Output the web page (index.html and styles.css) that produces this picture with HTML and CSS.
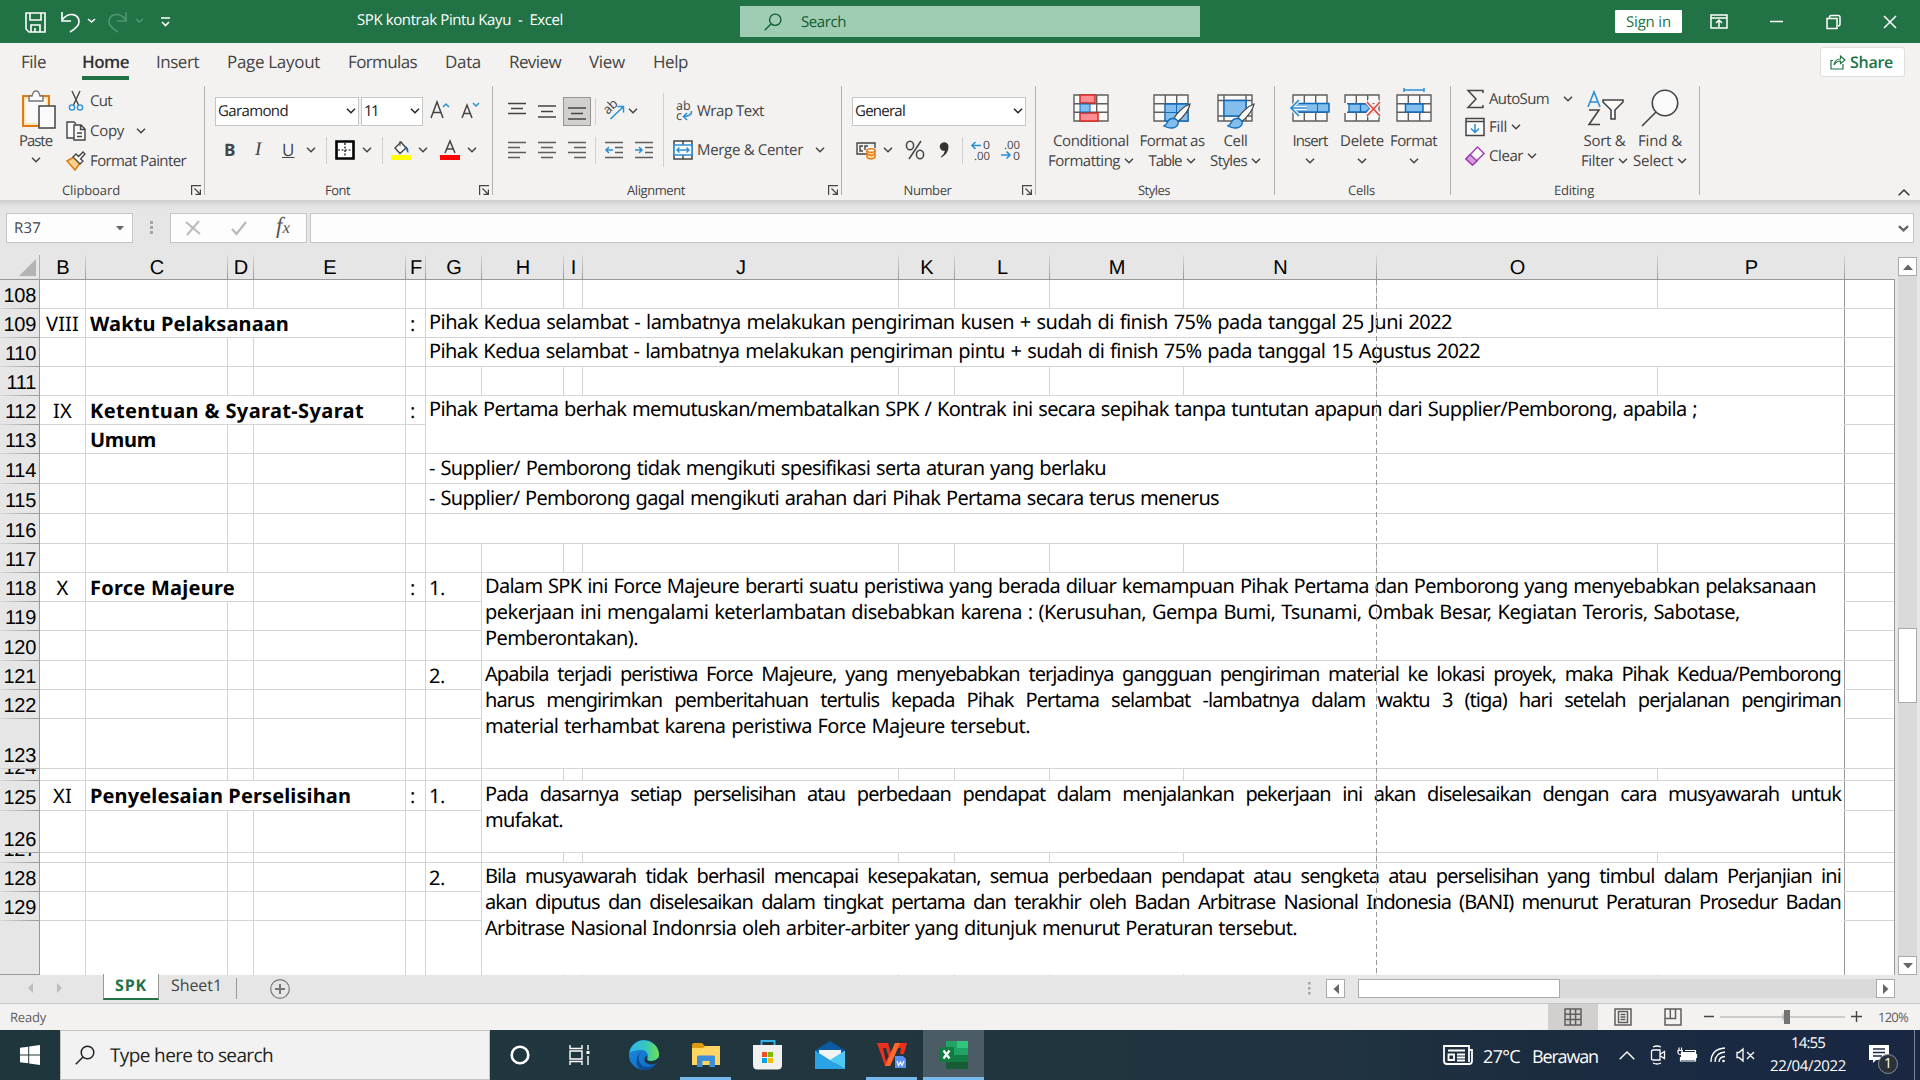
FILE: index.html
```
<!DOCTYPE html>
<html lang="id">
<head>
<meta charset="utf-8">
<title>SPK kontrak Pintu Kayu - Excel</title>
<link rel="stylesheet" href="styles.css">
</head>
<body>
<svg class="defs" aria-hidden="true">
  <symbol id="chev" viewBox="0 0 10 6"><path d="M1 .8 5 4.8 9 .8" fill="none" stroke="currentColor" stroke-width="1.5"/></symbol>
  <symbol id="launch" viewBox="0 0 10 10"><path d="M.6 10V.6H10M3.5 3.5 9 9M9.4 4.5V9.4H4.5" fill="none" stroke="#444" stroke-width="1.2"/></symbol>
  <symbol id="lens" viewBox="0 0 20 20"><circle cx="12.5" cy="7.5" r="6.3" fill="none" stroke="currentColor" stroke-width="1.5"/><path d="M8 12 .8 19.2" stroke="currentColor" stroke-width="1.5"/></symbol>
  <symbol id="grid" viewBox="0 0 36 28"><path d="M1 1H35V27H1Z" fill="#fafafa"/><path d="M1 1H35V27H1ZM1 9.7H35M1 18.3H35M12.3 1V27M23.7 1V27" fill="none" stroke="#605e5c" stroke-width="1.4"/></symbol>
  <symbol id="brush" viewBox="0 0 28 26"><path d="M27 1C21 3 14 10 11 15L15 18.5C20 14 26 7 27 1Z" fill="#fafafa" stroke="#444" stroke-width="1.3"/><path d="M1 23C5 22 3.500 16 9 15.500C13 15 16 18 15 21C13 26 6 26 1 23Z" fill="#83beec" stroke="#0f6cbd" stroke-width="1.4"/></symbol>
</svg>

<header class="titlebar">
  <svg class="quick" viewBox="0 0 160 24" fill="none" stroke="#fff" stroke-width="1.6">
    <path d="M1 3H20V22H4L1 19ZM5 3V10H16V3M6 22V15H15V22M10 18V22"/>
    <path d="M37 2V11H46M37 10C44 1 54 4 54 12C54 16 50 19 45 22"/><path d="M63 9 66.500 12 70 9"/>
    <g stroke="#4f9770"><path d="M101 2V11H92M101 10C94 1 84 4 84 12C84 16 88 19 93 22"/><path d="M111 9 114.500 12 118 9"/></g>
    <path d="M136 8H145M137 12 140.500 15.500 144 12"/>
  </svg>
  <span class="doc-title" data-w="206">SPK kontrak Pintu Kayu&nbsp; -&nbsp; Excel</span>
  <div class="title-search"><svg class="i18"><use href="#lens"/></svg><span data-w="45">Search</span></div>
  <div class="sign-in"><span data-w="45">Sign in</span></div>
  <svg class="window-icons" viewBox="0 0 190 18" fill="none" stroke="#fff" stroke-width="1.5">
    <path d="M1 2H17V15H1ZM1 5H17M9 14V7.500M6 10 9 7 12 10"/>
    <path d="M60 8.500H73"/>
    <path d="M117 5.500H127V15.500H117ZM119.500 5V3.500Q120 2.500 121.500 2.500H128Q130 2.500 130 4.500V11Q130 13 128 13"/>
    <path d="M174 3 186 15M186 3 174 15"/>
  </svg>
</header>

<nav class="tabs">
  <span data-w="25">File</span><span class="active" data-w="47">Home</span><span data-w="43">Insert</span><span data-w="93">Page Layout</span><span data-w="69">Formulas</span><span data-w="36">Data</span><span data-w="52">Review</span><span data-w="36">View</span><span data-w="35">Help</span>
  <div class="share"><svg viewBox="0 0 16 16" fill="none" stroke="#217346" stroke-width="1.2"><path d="M3 6.500H1V15H13V10M4 11C4.500 7 7 5 10.500 5V2L15 6L10.500 9.500V7C8 7 6 8 4 11Z"/></svg><b data-w="43">Share</b></div>
</nav>

<section class="ribbon">
  <div class="group clipboard">
    <div class="group-body clip-body">
      <div class="paste">
        <svg viewBox="0 0 36 40"><path d="M2 6H28V36H2Z" fill="#fde7b8" stroke="#e07b14" stroke-width="2"/><path d="M5 9H25V33H5Z" fill="#fafafa"/><path d="M8 11V6H11Q12 1 15 1T19 6H22V11Z" fill="#fafafa" stroke="#777" stroke-width="1.4"/><path d="M18 16H34V38H18Z" fill="#fafafa" stroke="#444" stroke-width="1.5"/></svg>
        <span data-w="33">Paste</span><svg class="chev"><use href="#chev"/></svg>
      </div>
      <div class="clip-list">
        <div class="tool"><svg viewBox="0 0 20 20" fill="none" stroke="#444" stroke-width="1.4"><path d="M6 0 12.500 14M14 0 7.500 14"/><circle cx="6" cy="16.500" r="2.600" stroke="#2b8fd6"/><circle cx="14" cy="16.500" r="2.600" stroke="#2b8fd6"/></svg><span data-w="22">Cut</span></div>
        <div class="tool"><svg viewBox="0 0 20 20" fill="#fafafa" stroke="#444" stroke-width="1.400"><path d="M8 17H1V1H8L10 3"/><path d="M8 4H15L19 8V19H8ZM14.500 4V8.500H19M11 12H16M11 15.500H16"/></svg><span data-w="34">Copy</span><svg class="chev"><use href="#chev"/></svg></div>
        <div class="tool"><svg viewBox="0 0 20 20"><path d="M1 10 8 6 14 12 9 19Z" fill="#fcd28b" stroke="#e07b14" stroke-width="1.500"/><path d="M7 6 10 3 12.500 5.500 17 1 19 3 14.500 8 17 10 14 13Z" fill="#fafafa" stroke="#444" stroke-width="1.300"/></svg><span data-w="96">Format Painter</span></div>
      </div>
    </div>
    <div class="group-label launchable"><span data-w="58">Clipboard</span><svg><use href="#launch"/></svg></div>
  </div>

  <div class="group font">
    <div class="group-body">
      <div class="row row1 font-r1">
        <div class="combo"><span data-w="70">Garamond</span><svg class="chev"><use href="#chev"/></svg></div>
        <div class="combo"><span data-w="14">11</span><svg class="chev"><use href="#chev"/></svg></div>
        <svg class="i20" viewBox="0 0 20 20" fill="none" stroke="#444" stroke-width="1.500"><path d="M1 17 7 1 13 17M3 11.500H11"/><path d="M13 6 16 3 19 6" stroke="#2b8fd6"/></svg>
        <svg class="i20" viewBox="0 0 20 20" fill="none" stroke="#444" stroke-width="1.500"><path d="M1 17 6 4 11 17M3 12.500H9"/><path d="M12 2 15 5 18 2" stroke="#2b8fd6"/></svg>
      </div>
      <div class="row row2 font-r2">
        <b class="fmt">B</b><i class="fmt it">I</i><u class="fmt">U</u><svg class="chev"><use href="#chev"/></svg><hr>
        <svg class="i20" viewBox="0 0 20 20" fill="none" stroke="#000"><path d="M1.500 1.500H18.500V18.500H1.500Z" stroke-width="2.600" fill="#fff"/><path d="M10 3V17M3 10H17" stroke-dasharray="2 1.500" stroke-width="1.200"/></svg>
        <svg class="chev"><use href="#chev"/></svg><hr>
        <svg class="i20" viewBox="0 0 20 20"><path d="M4 8 10 2 15 8 9 13.500Z" fill="#fafafa" stroke="#444" stroke-width="1.400"/><path d="M9 1V6" stroke="#444"/><path d="M14 6Q18 7 17.500 13Q15 12 15 8Z" fill="#1f6fb5"/><path d="M0 15H20V20H0Z" fill="#ff0"/></svg>
        <svg class="chev"><use href="#chev"/></svg>
        <svg class="i20" viewBox="0 0 20 20"><path d="M5 13 10 1 15 13M6.800 9H13.200" fill="none" stroke="#444" stroke-width="1.500"/><path d="M0 15H20V20H0Z" fill="red"/></svg>
        <svg class="chev"><use href="#chev"/></svg>
      </div>
    </div>
    <div class="group-label launchable"><span data-w="25">Font</span><svg><use href="#launch"/></svg></div>
  </div>

  <div class="group alignment">
    <div class="group-body align-body">
      <div class="align-left">
        <div class="row row1 align-r1">
          <svg class="i18" viewBox="0 0 18 18" stroke="#444" stroke-width="1.400"><path d="M0 1.500H18M3 6.500H15M0 11.500H18"/></svg>
          <svg class="i18" viewBox="0 0 18 18" stroke="#444" stroke-width="1.400"><path d="M0 4H18M3 9.500H15M0 15H18"/></svg>
          <div class="pressed"><svg class="i18" viewBox="0 0 18 18" stroke="#444" stroke-width="1.400"><path d="M0 6H18M3 11.500H15M0 17H18"/></svg></div>
          <hr>
          <svg class="i20" viewBox="0 0 20 20"><path d="M6.500 18 19 6M13.500 5.500H19.500V11.500" fill="none" stroke="#2b8fd6" stroke-width="1.500"/><text x="4" y="14" transform="rotate(-45 4 14)" font-size="13" fill="#444">ab</text></svg>
          <svg class="chev"><use href="#chev"/></svg>
        </div>
        <div class="row row2 align-r2">
          <svg class="i18" viewBox="0 0 18 18" stroke="#605e5c" stroke-width="1.500"><path d="M0 1.500H18M0 6.500H12M0 11.500H18M0 16.500H12"/></svg>
          <svg class="i18" viewBox="0 0 18 18" stroke="#605e5c" stroke-width="1.500"><path d="M0 1.500H18M3 6.500H15M0 11.500H18M3 16.500H15"/></svg>
          <svg class="i18" viewBox="0 0 18 18" stroke="#605e5c" stroke-width="1.500"><path d="M0 1.500H18M6 6.500H18M0 11.500H18M6 16.500H18"/></svg>
          <hr>
          <svg class="i18" viewBox="0 0 18 18" stroke="#605e5c" stroke-width="1.500" fill="none"><path d="M0 1.500H18M10 6.500H18M10 11.500H18M0 16.500H18"/><path d="M8 9H1M4 6 1 9 4 12" stroke="#2b8fd6"/></svg>
          <svg class="i18" viewBox="0 0 18 18" stroke="#605e5c" stroke-width="1.500" fill="none"><path d="M0 1.500H18M10 6.500H18M10 11.500H18M0 16.500H18"/><path d="M0 9H7M4 6 7 9 4 12" stroke="#2b8fd6"/></svg>
        </div>
      </div>
      <hr class="tall">
      <div class="align-right">
        <div class="row row1 wrap-row"><svg class="i20" viewBox="0 0 20 20"><text x="3" y="9" font-size="12.500" fill="#444">ab</text><text x="3" y="19" font-size="12.500" fill="#444">c</text><path d="M18.500 10Q19 15 11 15.500M14 12 10.500 15.500 14 19" fill="none" stroke="#2b8fd6" stroke-width="1.600"/></svg><span data-w="67">Wrap Text</span></div>
        <div class="row row2 wrap-row"><svg class="i20" viewBox="0 0 20 20"><path d="M1 1H19V19H1ZM10 1V19" fill="#fafafa" stroke="#444" stroke-width="1.500"/><path d="M1 5H19V15H1Z" fill="#fafafa" stroke="#2b8fd6" stroke-width="1.600"/><path d="M4 10H16M6.500 7.500 4 10 6.500 12.500M13.500 7.500 16 10 13.500 12.500" fill="none" stroke="#2b8fd6" stroke-width="1.400"/></svg><span data-w="106">Merge &amp; Center</span><svg class="chev"><use href="#chev"/></svg></div>
      </div>
    </div>
    <div class="group-label launchable"><span data-w="58">Alignment</span><svg><use href="#launch"/></svg></div>
  </div>

  <div class="group number">
    <div class="group-body">
      <div class="row row1"><div class="combo wide"><span data-w="50">General</span><svg class="chev"><use href="#chev"/></svg></div></div>
      <div class="row row2 num-r2">
        <svg class="i20" viewBox="0 0 20 20" fill="none" stroke="#444" stroke-width="1.400"><path d="M11 14H1V3H19V8M7 6H4V11H7M12 6H9V10"/><path d="M11 10.500V17.500Q15 20.500 19 17.500V10.500Z" fill="#fcd28b" stroke="#e07b14"/><path d="M11 14Q15 16.500 19 14" stroke="#e07b14"/><ellipse cx="15" cy="10.500" rx="4" ry="1.800" fill="#fafafa" stroke="#e07b14"/></svg>
        <svg class="chev"><use href="#chev"/></svg>
        <svg class="i20" viewBox="0 0 20 20" fill="none" stroke="#444" stroke-width="1.500"><path d="M16 1 4 19"/><ellipse cx="5" cy="5.500" rx="3.600" ry="4.300"/><ellipse cx="15" cy="14.500" rx="3.600" ry="4.300"/></svg>
        <svg class="i20" viewBox="0 0 20 20"><path d="M5 2.500a4.200 4.200 0 0 1 5.500 4q0 7-7 11l-.6-.8q3.600-2.700 4-6a4.200 4.200 0 0 1-1.900-8.200Z" fill="#333"/></svg>
        <hr>
        <svg class="i20" viewBox="0 0 20 20"><text x="12" y="9" font-size="11.500" textLength="7" lengthAdjust="spacingAndGlyphs" fill="#444">0</text><text x="3" y="20" font-size="11.500" textLength="16" lengthAdjust="spacingAndGlyphs" fill="#444">.00</text><path d="M10 5.500H1M4.500 2 1 5.500 4.500 9" fill="none" stroke="#2b8fd6" stroke-width="1.600"/></svg>
        <svg class="i20" viewBox="0 0 20 20"><text x="3" y="9" font-size="11.500" textLength="16" lengthAdjust="spacingAndGlyphs" fill="#444">.00</text><text x="12" y="20" font-size="11.500" textLength="7" lengthAdjust="spacingAndGlyphs" fill="#444">0</text><path d="M0 15H9M5.500 11.500 9 15 5.500 18.500" fill="none" stroke="#2b8fd6" stroke-width="1.600"/></svg>
      </div>
    </div>
    <div class="group-label launchable"><span data-w="48">Number</span><svg><use href="#launch"/></svg></div>
  </div>

  <div class="group styles">
    <div class="group-body bigs">
      <div class="big"><svg viewBox="0 0 40 40"><svg x="2" y="6" width="36" height="28"><use href="#grid"/></svg><path d="M9 7H24V15H9ZM9 25H27V33H9Z" fill="#ff8f94" stroke="#d92b1f" stroke-width="1.500"/><path d="M9 16H19V24H9Z" fill="#83beec" stroke="#0f6cbd"/></svg><span data-w="76">Conditional</span><div><span data-w="72">Formatting</span><svg class="chev"><use href="#chev"/></svg></div></div>
      <div class="big"><svg viewBox="0 0 40 40"><svg x="1" y="6" width="36" height="28"><use href="#grid"/></svg><path d="M13 16H36V33H13Z" fill="#83beec" stroke="#0f6cbd" stroke-width="1.300"/><path d="M13 24.500H36M24.500 16V33" stroke="#0f6cbd"/><svg x="11" y="15" width="28" height="26"><use href="#brush"/></svg></svg><span data-w="65">Format as</span><div><span data-w="33">Table</span><svg class="chev"><use href="#chev"/></svg></div></div>
      <div class="big"><svg viewBox="0 0 40 40"><path d="M2 7H36V33H2ZM2 12.500H36M2 28H36M8 7V33M30 7V33" fill="#fafafa" stroke="#605e5c" stroke-width="1.400"/><path d="M8 12.500H30V28H8Z" fill="#83beec" stroke="#0f6cbd" stroke-width="1.400"/><svg x="11" y="15" width="28" height="26"><use href="#brush"/></svg></svg><span data-w="24">Cell</span><div><span data-w="37">Styles</span><svg class="chev"><use href="#chev"/></svg></div></div>
    </div>
    <div class="group-label"><span data-w="32">Styles</span></div>
  </div>

  <div class="group cells">
    <div class="group-body bigs">
      <div class="big"><svg viewBox="0 0 40 40"><svg x="2" y="6" width="36" height="28"><use href="#grid"/></svg><path d="M6 15.500H39V24H6Z" fill="#83beec" stroke="#0f6cbd" stroke-width="1.500"/><path d="M27.500 15.500V24" stroke="#0f6cbd"/><path d="M1 20H17M9 12 1 20 9 28" fill="none" stroke="#f3f2f1" stroke-width="4"/><path d="M1 20H17M9 12 1 20 9 28" fill="none" stroke="#2b8fd6" stroke-width="1.700"/></svg><span data-w="35">Insert</span><div><svg class="chev"><use href="#chev"/></svg></div></div>
      <div class="big delete"><svg viewBox="0 0 40 40"><svg x="2" y="6" width="36" height="28"><use href="#grid"/></svg><path d="M0 15H5V25H0Z" fill="#f3f2f1"/><path d="M7 16H24L28 20 24 24H7ZM18.500 16V24" fill="#83beec" stroke="#0f6cbd" stroke-width="1.300"/><path d="M25 13 38 28M38 13 25 28" stroke="#f3f2f1" stroke-width="5"/><path d="M25 14 38 28M38 14 25 28" stroke="#e8473f" stroke-width="1.700"/></svg><span data-w="44">Delete</span><div><svg class="chev"><use href="#chev"/></svg></div></div>
      <div class="big"><svg viewBox="0 0 40 40"><svg x="2" y="6" width="36" height="28"><use href="#grid"/></svg><path d="M11.500 16H29V24H11.500Z" fill="#83beec" stroke="#0f6cbd" stroke-width="1.500"/><path d="M10 2H30M10 0V4M30 0V4" stroke="#2b8fd6" stroke-width="1.500"/></svg><span data-w="47">Format</span><div><svg class="chev"><use href="#chev"/></svg></div></div>
    </div>
    <div class="group-label"><span data-w="27">Cells</span></div>
  </div>

  <div class="group editing">
    <div class="group-body edit-body">
      <div class="edit-list">
        <div class="tool sum"><svg viewBox="0 0 20 20" fill="none" stroke="#444" stroke-width="1.500"><path d="M18 4V1.500H3L11 10 3 18.500H18V16"/></svg><span data-w="60">AutoSum</span><svg class="chev"><use href="#chev"/></svg></div>
        <div class="tool"><svg viewBox="0 0 20 20" fill="#fafafa" stroke="#444" stroke-width="1.500"><path d="M1 1.500H19V18.500H1ZM1 4.500H19"/><path d="M10 7V15.500M6 11.500 10 15.500 14 11.500" stroke="#2b8fd6" fill="none"/></svg><span data-w="18">Fill</span><svg class="chev"><use href="#chev"/></svg></div>
        <div class="tool"><svg viewBox="0 0 20 20" stroke="#a03fb0" stroke-width="1.500"><path d="M1 13 12.500 1 19 7.500 7.500 19Z" fill="#fafafa"/><path d="M1 13 5 8.500 12 15 7.500 19Z" fill="#d79bdf"/></svg><span data-w="34">Clear</span><svg class="chev"><use href="#chev"/></svg></div>
      </div>
      <div class="big"><svg viewBox="0 0 40 40" fill="none" stroke="#444" stroke-width="1.600"><path d="M3 19 9 4 15 19M5 14H13" stroke="#2b8fd6"/><path d="M4 22H14L4 36.500H15"/><path d="M18 12H38V14L30 22V31H26V22L18 14Z" fill="#fafafa"/></svg><span data-w="42">Sort &amp;</span><div><span data-w="33">Filter</span><svg class="chev"><use href="#chev"/></svg></div></div>
      <div class="big"><svg viewBox="0 0 40 40" fill="#fafafa" stroke="#444" stroke-width="1.600"><circle cx="25" cy="15" r="12.700"/><path d="M16 24 2 38"/></svg><span data-w="44">Find &amp;</span><div><span data-w="40">Select</span><svg class="chev"><use href="#chev"/></svg></div></div>
    </div>
    <div class="group-label"><span data-w="40">Editing</span></div>
  </div>
  <svg class="collapse" viewBox="0 0 12 7"><path d="M.7 6.300 6 1 11.300 6.300" fill="none" stroke="#333" stroke-width="1.500"/></svg>
</section>

<section class="formula-bar">
  <div class="name-box"><span data-w="27">R37</span><svg viewBox="0 0 8 5"><path d="M0 0H8L4 4.500Z" fill="#666"/></svg></div>
  <svg class="dots" viewBox="0 0 4 14"><path d="M0 0H3V3H0ZM0 5H3V8H0ZM0 10H3V13H0Z" fill="#a6a6a6"/></svg>
  <div class="fx-box">
    <svg viewBox="0 0 16 16"><path d="M1 2 15 14M14 1 2 15" stroke="#bbb" stroke-width="2"/></svg>
    <svg viewBox="0 0 16 16"><path d="M1 9 5.500 14 15 2" fill="none" stroke="#bbb" stroke-width="2.400"/></svg>
    <span>f<small>x</small></span>
  </div>
  <div class="formula"><svg viewBox="0 0 12 7"><path d="M1 1 6 5.500 11 1" fill="none" stroke="#666" stroke-width="2.600"/></svg></div>
</section>

<main class="workspace">
  <div class="sheet">
    <div class="corner"><svg viewBox="0 0 16 16"><path d="M16 0V16H0Z" fill="#b4b4b4"/></svg></div>
    <div class="col-heads"><span>B</span><span>C</span><span>D</span><span>E</span><span>F</span><span>G</span><span>H</span><span>I</span><span>J</span><span>K</span><span>L</span><span>M</span><span>N</span><span>O</span><span>P</span><span></span></div>
    <div class="row-heads"><span>108</span><span>109</span><span>110</span><span>111</span><span>112</span><span>113</span><span>114</span><span>115</span><span>116</span><span>117</span><span>118</span><span>119</span><span>120</span><span>121</span><span>122</span><span>123</span><span>124</span><span>125</span><span>126</span><span>127</span><span>128</span><span>129</span><span></span></div>
    <div class="col-lines"><i></i><i></i><i></i><i></i><i></i><i></i><i></i><i></i><i></i><i></i><i></i><i></i><i></i><i></i><i></i><i></i></div>
    <div class="row-lines"><i></i><i></i><i></i><i></i><i></i><i></i><i></i><i></i><i></i><i></i><i></i><i></i><i></i><i></i><i></i><i></i><i></i><i></i><i></i><i></i><i></i><i></i><i></i></div>

    <div class="cell num r109"><span data-w="33">VIII</span></div>
    <div class="cell head c-ce r109"><span data-w="199">Waktu Pelaksanaan</span></div>
    <div class="cell colon r109">:</div>
    <div class="cell text c-gp r109"><p data-w="1023">Pihak Kedua selambat - lambatnya melakukan pengiriman kusen + sudah di finish 75% pada tanggal 25 Juni 2022</p></div>
    <div class="cell text c-gp r110"><p data-w="1051">Pihak Kedua selambat - lambatnya melakukan pengiriman pintu + sudah di finish 75% pada tanggal 15 Agustus 2022</p></div>

    <div class="cell num r112"><span data-w="19">IX</span></div>
    <div class="cell head c-ce r112"><span data-w="274">Ketentuan &amp; Syarat-Syarat</span></div>
    <div class="cell head c-c r113"><span data-w="66">Umum</span></div>
    <div class="cell colon r112">:</div>
    <div class="cell text c-gp r112-113"><p data-w="1268">Pihak Pertama berhak memutuskan/membatalkan SPK / Kontrak ini secara sepihak tanpa tuntutan apapun dari Supplier/Pemborong, apabila ;</p></div>
    <div class="cell text c-gp r114"><p data-w="677">- Supplier/ Pemborong tidak mengikuti spesifikasi serta aturan yang berlaku</p></div>
    <div class="cell text c-gp r115"><p data-w="790">- Supplier/ Pemborong gagal mengikuti arahan dari Pihak Pertama secara terus menerus</p></div>
    <div class="cell text c-gp r116"></div>

    <div class="cell num r118"><span data-w="12">X</span></div>
    <div class="cell head c-cd r118"><span data-w="145">Force Majeure</span></div>
    <div class="cell colon r118">:</div>
    <div class="cell item r118"><span data-w="16">1.</span></div>
    <div class="cell text c-hp r118-120"><p data-w="1331">Dalam SPK ini Force Majeure berarti suatu peristiwa yang berada diluar kemampuan Pihak Pertama dan Pemborong yang menyebabkan pelaksanaan</p><p data-w="1255">pekerjaan ini mengalami keterlambatan disebabkan karena : (Kerusuhan, Gempa Bumi, Tsunami, Ombak Besar, Kegiatan Teroris, Sabotase,</p><p data-w="153">Pemberontakan).</p></div>
    <div class="cell item r121"><span data-w="16">2.</span></div>
    <div class="cell text c-hp r121-123"><p class="full">Apabila terjadi peristiwa Force Majeure, yang menyebabkan terjadinya gangguan pengiriman material ke lokasi proyek, maka Pihak Kedua/Pemborong</p><p class="full">harus mengirimkan pemberitahuan tertulis kepada Pihak Pertama selambat -lambatnya dalam waktu 3 (tiga) hari setelah perjalanan pengiriman</p><p data-w="545">material terhambat karena peristiwa Force Majeure tersebut.</p></div>

    <div class="cell num r125"><span data-w="19">XI</span></div>
    <div class="cell head c-ce r125"><span data-w="261">Penyelesaian Perselisihan</span></div>
    <div class="cell colon r125">:</div>
    <div class="cell item r125"><span data-w="16">1.</span></div>
    <div class="cell text c-hp r125-126"><p class="full">Pada dasarnya setiap perselisihan atau perbedaan pendapat dalam menjalankan pekerjaan ini akan diselesaikan dengan cara musyawarah untuk</p><p data-w="78">mufakat.</p></div>
    <div class="cell item r128"><span data-w="16">2.</span></div>
    <div class="cell text c-hp r128-130"><p class="full">Bila musyawarah tidak berhasil mencapai kesepakatan, semua perbedaan pendapat atau sengketa atau perselisihan yang timbul dalam Perjanjian ini</p><p class="full">akan diputus dan diselesaikan dalam tingkat pertama dan terakhir oleh Badan Arbitrase Nasional Indonesia (BANI) menurut Peraturan Prosedur Badan</p><p data-w="812">Arbitrase Nasional Indonrsia oleh arbiter-arbiter yang ditunjuk menurut Peraturan tersebut.</p></div>
    <div class="page-break"></div>
  </div>
  <div class="vscroll">
    <div class="sbtn"><svg viewBox="0 0 10 6"><path d="M0 6 5 .5 10 6Z" fill="#666"/></svg></div>
    <div class="vtrack"><div class="vthumb"></div></div>
    <div class="sbtn"><svg viewBox="0 0 10 6"><path d="M0 0 5 5.500 10 0Z" fill="#666"/></svg></div>
  </div>
</main>

<section class="sheet-tabs">
  <svg class="nav" viewBox="0 0 36 10"><path d="M6 0V10L1 5ZM30 0V10L35 5Z" fill="#bdbdbd"/></svg>
  <div class="sheet-tab on"><b data-w="32">SPK</b></div>
  <div class="sheet-tab"><span data-w="51">Sheet1</span></div>
  <hr>
  <svg class="add" viewBox="0 0 20 20" fill="none" stroke="#777"><circle cx="10" cy="10" r="9.300" stroke-width="1.200"/><path d="M5 10H15M10 5V15" stroke-width="2"/></svg>
  <svg class="dots" viewBox="0 0 4 14"><path d="M0 0H2.500V2.500H0ZM0 5H2.500V7.500H0ZM0 10H2.500V12.500H0Z" fill="#a6a6a6"/></svg>
  <div class="hscroll">
    <div class="sbtn"><svg viewBox="0 0 6 10"><path d="M6 0V10L.5 5Z" fill="#666"/></svg></div>
    <div class="htrack"><div class="hthumb"></div></div>
    <div class="sbtn"><svg viewBox="0 0 6 10"><path d="M0 0V10L5.500 5Z" fill="#666"/></svg></div>
  </div>
</section>

<section class="status">
  <span class="ready" data-w="36">Ready</span>
  <div class="view on"><svg viewBox="0 0 18 18" fill="none" stroke="#605e5c" stroke-width="1.500"><path d="M1 1H17V17H1ZM1 6.300H17M1 11.600H17M6.300 1V17M11.600 1V17"/></svg></div>
  <div class="view"><svg viewBox="0 0 18 18" fill="none" stroke="#605e5c" stroke-width="1.500"><path d="M1 1H17V17H1ZM4.500 3.500H13.500V14.500H4.500ZM6.500 6.500H11.500M6.500 9H11.500M6.500 11.500H11.500"/></svg></div>
  <div class="view"><svg viewBox="0 0 18 18" fill="none" stroke="#605e5c" stroke-width="1.500"><path d="M1 1H17V17H1ZM1 10.500H11.500V1M6.300 1V10.500"/></svg></div>
  <svg class="zoom" viewBox="0 0 158 14"><path d="M0 6.500H10M147 6.500H158M152.500 1V12" stroke="#444" stroke-width="1.400"/><path d="M16 7H141M79 3.500V10.500" stroke="#a6a6a6"/><path d="M80 0H86V14H80Z" fill="#737373"/></svg>
  <span class="percent" data-w="30">120%</span>
</section>

<footer class="taskbar">
  <div class="start"><svg viewBox="0 0 20 20" fill="#fff"><path d="M0 2.800 8.200 1.700V9.500H0ZM9.200 1.500 20 0V9.500H9.200ZM0 10.500H8.200V18.300L0 17.200ZM9.200 10.500H20V20L9.200 18.500Z"/></svg></div>
  <div class="task-search"><svg viewBox="0 0 20 20"><use href="#lens"/></svg><span data-w="163">Type here to search</span></div>
  <div class="app cortana"><svg viewBox="0 0 20 20"><circle cx="10" cy="10" r="8.300" fill="none" stroke="#fff" stroke-width="2.600"/></svg></div>
  <div class="app view-app"><svg viewBox="0 0 22 20" fill="none" stroke="#fff" stroke-width="1.400"><path d="M1 0V3.500H13V0M1 20V16.500H13V20M1 6H13V14H1ZM19 0V5M19 11V20"/><path d="M17.500 6H20.500V9H17.500Z" fill="#fff" stroke="none"/></svg></div>
  <div class="app edge"><svg viewBox="0 0 30 30"><defs><linearGradient id="e1" x1="0" x2="1"><stop offset="0" stop-color="#2fb7ea"/><stop offset=".55" stop-color="#35c6c0"/><stop offset="1" stop-color="#6fe04a"/></linearGradient><linearGradient id="e2" x1="0" y1="0" x2="1" y2="1"><stop offset="0" stop-color="#1a8fe0"/><stop offset="1" stop-color="#0f63c0"/></linearGradient></defs><circle cx="15" cy="15" r="15" fill="url(#e2)"/><path d="M.3 12.500A15 15 0 0 1 30 14.500C30 19 26 21 22 21C18 21 17.500 19 18.500 17.500C20 15 18 10.500 12.500 10C7 9.600 1.500 12 .3 12.500Z" fill="url(#e1)"/><path d="M12.500 12C8 15 9 23 14 26C19 28.500 25 26.500 28 22.500C26 27.500 20 31 13 29.800C5 27 7 14 12.500 12Z" fill="#0c4d96"/><path d="M18.500 17.500C17.500 19 18 21 22 21C25 21 27.500 20 29.200 17.800L29.800 18.500C29.400 20.500 28.600 22 27.800 23C24 25.500 17 25 15.500 20.500C15 17 18.500 14.500 18.500 17.500Z" fill="#20343e"/></svg></div>
  <div class="app files open"><svg viewBox="0 0 28 24"><path d="M0 2Q0 0 2 0H10L13 3H28V22H0Z" fill="#dc9a0c"/><path d="M0 5H11L13.500 3H28V22H0Z" fill="#ffd563"/><path d="M5 24V14Q5 12.500 6.500 12.500H21.500Q23 12.500 23 14V24H17.500V18H10.500V24Z" fill="#3c8fd6"/></svg></div>
  <div class="app store"><svg viewBox="0 0 30 30"><path d="M8.500 5V1H21.500V5" fill="none" stroke="#2fb2ea" stroke-width="2"/><path d="M0 5H29V25Q29 29.500 24.500 29.500H4.500Q0 29.500 0 25Z" fill="#f0f0f0"/><path d="M9 12H14V17H9Z" fill="#f25022"/><path d="M15 12H20V17H15Z" fill="#7fba00"/><path d="M9 18H14V23H9Z" fill="#00a4ef"/><path d="M15 18H20V23H15Z" fill="#ffb900"/></svg></div>
  <div class="app mail"><svg viewBox="0 0 30 28"><path d="M0 9.500 15 0 30 9.500V18H0Z" fill="#0c59a4"/><path d="M4 9H26V18L15 24 4 18Z" fill="#f4f4f4"/><path d="M0 9.500 15 19 30 28H0Z" fill="#2aa3e6"/><path d="M30 9.500 15 19 30 28Z" fill="#50c8f5"/></svg></div>
  <div class="app wps open"><svg viewBox="0 0 30 28"><path d="M0 2H11L14 12 18 2H30L27 13H23L24 7H21L13 25H8Z" fill="#e8301c"/><path d="M6 7H9L11.500 16 9 20Z" fill="#20343e"/><path d="M18 2H23L13 25H8Z" fill="#ff6a2a"/><path d="M18 15H26L29 18V27H18Z" fill="#5b8ff0"/><path d="M20 20 21.500 24.500 23.500 21 25 24.500 27 20" fill="none" stroke="#fff" stroke-width="1.200"/></svg></div>
  <div class="app excel open"><svg viewBox="0 0 30 28"><path d="M7 0H29V28H7Z" fill="#21a366"/><path d="M18 0H29V7H18Z" fill="#33c481"/><path d="M7 14H18V21H7ZM18 14H29V21H18Z" fill="#107c41"/><path d="M7 21H29V28H7Z" fill="#185c37"/><rect y="6" width="15" height="15" rx="1" fill="#107c41"/><path d="M4.500 9.500 10.500 17.500M10.500 9.500 4.500 17.500" stroke="#fff" stroke-width="2.200"/></svg></div>
  <div class="tray">
    <svg class="news" viewBox="0 0 30 20" fill="none" stroke="#fff" stroke-width="1.800"><path d="M26 5H29V16Q29 19 26 19H4Q1 19 1 16V1H26V17M5 5.500H22M14 9.500H22M14 12.500H22M14 15.500H22"/><path d="M5.500 9.500H11V15H5.500Z"/></svg>
    <span data-w="37">27°C</span><span data-w="66">Berawan</span>
    <svg class="caret" viewBox="0 0 16 9" fill="none" stroke="#fff" stroke-width="1.400"><path d="M.7 8.300 8 1 15.300 8.300"/></svg>
    <svg class="meet" viewBox="0 0 16 20" fill="none" stroke="#fff" stroke-width="1.300"><path d="M3 5H10V15H3Q1.500 15 1.500 13.500V6.500Q1.500 5 3 5ZM10.500 9 14.500 6.500V13.500L10.500 11M3 2Q7 0 11 2M3 18Q7 20 11 18"/></svg>
    <svg class="batt" viewBox="0 0 20 16"><path d="M4 5H18V13H4Z" fill="#fff"/><path d="M8 3.500H18.500V14H3.500V10M19.500 7V11M1 3V6Q3 9 5 6V3M.5 3.500H6M2 .5V3M4.500 .5V3" fill="none" stroke="#fff" stroke-width="1.200"/></svg>
    <svg class="wifi" viewBox="0 0 16 16" fill="none" stroke="#fff" stroke-width="1.300"><path d="M1 15Q1 2 15 1M5 15Q5 6 15 5M9 15Q9 10 15 9.500"/><circle cx="13.500" cy="14" r="1.300" fill="#fff" stroke="none"/></svg>
    <svg class="mute" viewBox="0 0 19 14" fill="none" stroke="#fff" stroke-width="1.300"><path d="M1 4.500H3L7 1V13L3 9.500H1ZM11 4 18 11M18 4 11 11"/></svg>
    <div class="clock"><span data-w="34">14:55</span><span data-w="76">22/04/2022</span></div>
    <div class="notice"><svg viewBox="0 0 20 18"><path d="M0 0H20V15H7L4 18V15H0Z" fill="#fff"/><path d="M4 4H16M4 7.500H16M4 11H13" stroke="#1b2a42" stroke-width="1.300"/></svg><span class="badge">1</span></div>
  </div>
</footer>
<script src="tracking.js"></script>
</body>
</html>
```
FILE: styles.css
```
* { box-sizing: border-box; }
body { margin: 0; width: 1920px; height: 1080px; overflow: hidden; display: flex; flex-direction: column; font-family: "Open Sans", "Noto Sans", sans-serif; font-size: 15px; color: #444; background: #e6e6e6; text-rendering: geometricPrecision; }
svg { display: block; flex: none; overflow: visible; }
.defs { width: 0; height: 0; position: absolute; }
hr { margin: 0; border: 0; width: 1px; height: 27px; background: #d2d0ce; flex: none; }
[data-w] { white-space: nowrap; flex: none; }
.chev { width: 10px; height: 6px; }
.i18 { width: 18px; height: 18px; }
.i20 { width: 20px; height: 20px; }

.titlebar { height: 43px; flex: none; background: #217346; display: flex; align-items: center; color: #fff; }
.quick { width: 160px; height: 24px; margin-left: 25px; }
.doc-title { width: 206px; margin-left: 172px; padding-bottom: 3px; }
.title-search { width: 460px; height: 31px; margin-left: 177px; background: #9fcdb3; color: #0e5c2f; display: flex; align-items: center; gap: 19px; padding-left: 24px; }
.sign-in { width: 67px; height: 23px; margin-left: 415px; background: #fff; color: #217346; border-radius: 1px; display: flex; align-items: center; justify-content: center; }
.window-icons { width: 190px; height: 18px; margin-left: 28px; }

.tabs { height: 43px; flex: none; background: #f3f2f1; display: flex; align-items: center; gap: 28px; padding: 0 15px 5px 21px; font-size: 17px; }
.tabs > span { height: 36px; line-height: 35px; border-bottom: 4px solid transparent; }
.tabs > .active { margin-left: 8px; border-color: #217346; font-weight: 600; color: #323130; margin-right: -1px; }
.share { margin-left: auto; width: 85px; height: 30px; background: #fff; border: 1px solid #e1dfdd; border-radius: 3px; color: #217346; display: flex; align-items: center; gap: 4px; padding-left: 9px; font-size: 16px; }
.share b { font-weight: 600; }
.share svg { width: 16px; height: 16px; }

.ribbon { height: 114px; flex: none; background: #f3f2f1; display: flex; }
.group { height: 109px; border-right: 1px solid #b3b0ad; display: flex; flex-direction: column; }
.clipboard { width: 205px; }
.font { width: 288px; }
.alignment { width: 349px; }
.number { width: 194px; }
.styles { width: 239px; }
.cells { width: 176px; }
.editing { width: 249px; }
.group-body { height: 94px; flex: none; }
.group-label { height: 20px; padding-right: 2px; display: grid; grid-template-columns: 1fr; align-items: center; font-size: 13px; line-height: 20px; }
.group-label span { justify-self: center; }
.group-label.launchable { padding: 0; grid-template-columns: 1fr 22px; }
.group-label svg { width: 10px; height: 10px; margin-left: 9px; }

.tool { height: 30px; display: flex; align-items: center; gap: 4px; }
.tool > svg:first-child { width: 20px; height: 20px; }
.tool .chev { margin-left: 8px; }
.clip-body { display: flex; }
.paste { width: 45px; margin-left: 13px; padding-top: 4px; display: flex; flex-direction: column; align-items: center; }
.paste > svg:first-child { width: 36px; height: 40px; margin-left: 6px; }
.paste span { line-height: 22px; }
.paste .chev { margin-top: 5px; }
.clip-list { margin-left: 8px; }

.row { display: grid; align-items: center; justify-items: start; }
.row1 { height: 50px; }
.row2 { height: 28px; }
.combo { width: 100%; height: 29px; background: #fff; border: 1px solid #c8c6c4; display: flex; align-items: center; justify-content: space-between; padding: 0 2px; color: #222; }
.combo.wide { width: 174px; margin-left: 10px; }
.font-r1 { padding-left: 10px; grid-template-columns: 144px 62px 20px 20px; column-gap: 2px; }
.font-r1 svg.i20 { margin-left: 5px; }
.font-r1 svg.i20:last-child { margin-left: 14px; }
.font-r2 { padding-left: 19px; grid-template-columns: 31px 27px 24px 20px 9px 27px 20px 9px 27px 22px 27px 10px; }
.fmt { font-size: 17px; line-height: 24px; }
.it { font-family: "Liberation Serif", serif; font-size: 19px; }
.align-body { display: flex; }
.align-left { width: 170px; }
.align-r1 { padding-left: 15px; grid-template-columns: 30px 25px 32px 9px 24px 10px; }
.align-r2 { padding-left: 15px; grid-template-columns: 30px 30px 27px 10px 30px 18px; }
.pressed { width: 28px; height: 29px; background: #d2d0ce; border: 1px solid #979593; display: grid; place-items: center; }
.tall { height: 74px; margin-top: 7px; }
.wrap-row { padding-left: 9px; grid-template-columns: 24px 118px 10px; }
.num-r2 { padding-left: 14px; grid-template-columns: 27px 22px 33px 24px 9px 30px 20px; }

.bigs { display: flex; }
.styles .bigs { gap: 5.5px; padding-left: 12px; }
.cells .bigs { gap: 6px; padding-left: 15px; }
.big { display: flex; flex-direction: column; align-items: center; padding-top: 2px; line-height: 20px; }
.big.delete { margin-left: 4px; }
.big > svg { width: 40px; height: 40px; margin-bottom: 3px; }
.big > div { height: 20px; display: flex; align-items: center; gap: 4px; }
.edit-body { display: flex; }
.edit-list { width: 130px; padding-left: 14px; }
.edit-list .tool { height: 29px; }
.edit-list .tool:first-child { height: 26px; }
.edit-list .tool .chev { margin-left: 0; }
.edit-list .sum .chev { margin-left: 10px; }
.edit-body .big + .big { margin-left: 5px; }
.collapse { width: 12px; height: 7px; margin: 103px 0 0 198px; }

.formula-bar { height: 55px; flex: none; display: flex; align-items: center; padding: 13px 0 12px 6px; background: linear-gradient(#cfcdcb, #e0e0e0 5px, #e6e6e6 10px); }
.formula-bar > div { height: 30px; background: #fdfdfd; border: 1px solid #c6c6c6; display: flex; align-items: center; }
.name-box { width: 127px; justify-content: space-between; padding: 0 8px 0 7px; }
.name-box svg { width: 8px; height: 5px; }
.dots { width: 4px; height: 14px; }
.formula-bar .dots { margin: 0 16px 0 17px; }
.fx-box { width: 137px; padding-left: 14px; gap: 30px; }
.fx-box svg { width: 16px; height: 16px; }
.fx-box span { font: italic 23px/26px "Liberation Serif", serif; color: #555; margin: 0 0 2px -1px; }
.fx-box small { font-size: 17px; }
.formula { width: 1604px; margin-left: 3px; justify-content: flex-end; padding-right: 4px; }
.formula svg { width: 11px; height: 7px; }

.workspace { height: 720px; flex: none; display: flex; }
.sheet { width: 1895px; flex: none; display: grid;
  grid-template-columns: 40px 46px 142px 26px 152px 20px 56px 82px 19px 316px 56px 95px 134px 193px 281px 187px 50px;
  grid-template-rows: 25px repeat(6, 29px) repeat(3, 30px) repeat(3, 29px) 30px 29px 29px 50px 12px 30px 42px 10px 29px 29px 54px;
  color: #000; font: 20px/28px "Noto Sans", "Open Sans", sans-serif; border-bottom: 1px solid #999; }
.corner { grid-area: 1 / 1; border-right: 1px solid #b0b0b0; border-bottom: 1px solid #999; display: flex; align-items: flex-end; justify-content: flex-end; padding: 0 3px 3px 0; }
.corner svg { width: 17px; height: 17px; }
.col-heads { grid-area: 1 / 2 / 2 / -1; display: grid; grid-template-columns: subgrid; font: 20px/27px "Liberation Sans", Arial, sans-serif; text-align: center; border-bottom: 1px solid #999; }
.col-heads span { height: 24px; background: linear-gradient(#d8d8d8, #999) right / 1px 100% no-repeat; }
.col-heads span:last-child { background: none; }
.row-heads { grid-area: 2 / 1 / -1 / 2; display: grid; grid-template-rows: subgrid; font: 20px/26px "Liberation Sans", Arial, sans-serif; border-right: 1px solid #999; }
.row-heads span { display: flex; align-items: flex-end; justify-content: flex-end; overflow: hidden; padding-right: 3px; letter-spacing: -0.3px; min-height: 0; background: linear-gradient(90deg, #d8d8d8, #999) bottom / 100% 1px no-repeat; }
.row-heads span:last-child { background: none; }
.col-lines { grid-area: 2 / 2 / -1 / -1; display: grid; grid-template-columns: subgrid; background: #fff; }
.col-lines i { border-right: 1px solid #d4d4d4; }
.col-lines i:nth-child(15), .col-lines i:last-child { border-color: #999; }
.row-lines { grid-area: 2 / 2 / -1 / -1; display: grid; grid-template-rows: subgrid; margin-right: 1px; }
.row-lines i { border-bottom: 1px solid #d4d4d4; }
.row-lines i:last-child { border: 0; }
.cell { margin: 0 1px 1px 0; background: #fff; white-space: nowrap; min-width: 0; min-height: 0; line-height: 30px; }
.num { grid-column: 2; display: flex; justify-content: center; }
.head { font-weight: 700; padding-left: 4px; }
.colon { grid-column: 6; padding-left: 4px; }
.item { grid-column: 7; padding-left: 3px; }
.text { line-height: 26px; padding: 0 3px; word-spacing: 1.2px; }
.text p { margin: 0; width: max-content; }
.text .full { width: auto; text-align: justify; text-align-last: justify; white-space: normal; letter-spacing: -0.93px; height: 26px; }
.c-c { grid-column: 3; }
.c-cd { grid-column: 3 / 5; }
.c-ce { grid-column: 3 / 6; }
.c-gp { grid-column: 7 / 17; }
.c-hp { grid-column: 8 / 17; }
.r109 { grid-row: 3; }
.r110 { grid-row: 4; }
.r112 { grid-row: 6; }
.r113 { grid-row: 7; }
.r112-113 { grid-row: 6 / 8; }
.r114 { grid-row: 8; }
.r115 { grid-row: 9; }
.r116 { grid-row: 10; }
.r118 { grid-row: 12; }
.r118-120 { grid-row: 12 / 15; }
.r121 { grid-row: 15; }
.r121-123 { grid-row: 15 / 18; }
.r125 { grid-row: 19; }
.r125-126 { grid-row: 19 / 21; }
.r128 { grid-row: 22; }
.r128-130 { grid-row: 22 / 25; }
.text.r114, .text.r115 { line-height: 28px; }
.page-break { grid-area: 2 / 14 / -1 / 15; justify-self: end; width: 1px; background: repeating-linear-gradient(#999 0 5px, transparent 5px 8px); }

.vscroll { width: 19px; margin: 2px 0 0 3px; display: flex; flex-direction: column; }
.sbtn { width: 19px; height: 19px; flex: none; background: #fff; border: 1px solid #ababab; display: grid; place-items: center; }
.vscroll .sbtn svg { width: 10px; height: 6px; }
.vtrack { flex: 1; background: #dadada; padding-top: 352px; }
.vthumb { height: 75px; background: #fff; border: 1px solid #ababab; }

.sheet-tabs { height: 29px; flex: none; display: flex; align-items: flex-start; border-bottom: 1px solid #c8c6c4; font-size: 16px; }
.nav { width: 36px; height: 10px; margin: 8px 40px 0 27px; }
.sheet-tab { height: 25px; line-height: 20px; padding: 0 12px; }
.sheet-tab.on { width: 56px; background: #fff; border: 1px solid #999; border-top: 0; border-bottom: 2px solid #217346; color: #217346; padding: 0 11px; margin-top: -1px; height: 26px; line-height: 22px; }
.sheet-tabs hr { height: 21px; background: #999; margin: 3px 33px 0 2px; }
.add { width: 20px; height: 20px; margin-top: 4px; }
.sheet-tabs .dots { margin: 7px 0 0 1018px; }
.hscroll { width: 569px; margin: 4px 0 0 14px; display: flex; }
.hscroll .sbtn svg { width: 6px; height: 10px; }
.htrack { flex: 1; background: linear-gradient(90deg, #e6e6e6 13px, #dadada 13px); padding-left: 13px; }
.hthumb { width: 202px; height: 19px; background: #fff; border: 1px solid #ababab; }

.status { height: 26px; flex: none; background: #f3f2f1; display: flex; align-items: center; font-size: 13px; color: #605e5c; }
.ready { width: 36px; margin-left: 10px; }
.view { width: 50px; height: 26px; display: grid; place-items: center; }
.view svg { width: 18px; height: 18px; }
.view.on { background: #d2d0ce; margin-left: 1502px; }
.zoom { width: 158px; height: 14px; margin-left: 6px; }
.percent { margin-left: 16px; }

.taskbar { height: 50px; flex: none; display: flex; color: #fff; background: linear-gradient(90deg, #20363d 0%, #21363f 45%, #20333f 70%, #1b2c40 80%, #192743 100%); }
.start { width: 60px; display: grid; place-items: center; }
.start svg { width: 20px; height: 20px; }
.task-search { width: 430px; background: #f2f2f2; border: 1px solid #c4c4c4; color: #222; display: flex; align-items: center; gap: 15px; padding-left: 14px; font-size: 19px; }
.task-search svg { width: 20px; height: 20px; }
.app { width: 51px; display: grid; place-items: center; border-bottom: 3px solid transparent; padding-top: 2px; }
.app.open { border-color: #76b9ed; }
.cortana { margin-left: 4px; }
.cortana svg { width: 20px; height: 20px; }
.view-app { margin-left: 9px; }
.view-app svg { width: 22px; height: 20px; }
.edge { margin-left: 13px; }
.edge svg, .store svg { width: 30px; height: 30px; }
.files { margin-left: 11px; }
.files svg { width: 28px; height: 24px; }
.store { margin-left: 11px; }
.mail { margin-left: 11px; }
.mail svg, .wps svg, .excel svg { width: 30px; height: 28px; }
.wps { margin-left: 11px; }
.excel { width: 61px; margin-left: 6px; background: #4b5c66; }
.tray { margin-left: 459px; display: flex; align-items: center; font-size: 18px; }
.tray > span { margin-left: 10px; padding-top: 3px; }
.tray > span + span { margin-left: 12px; }
.news { width: 30px; height: 20px; }
.caret { width: 16px; height: 9px; margin-left: 21px; }
.meet { width: 16px; height: 20px; margin-left: 15px; }
.batt { width: 20px; height: 16px; margin-left: 11px; }
.wifi { width: 16px; height: 16px; margin-left: 13px; }
.mute { width: 19px; height: 14px; margin-left: 10px; }
.clock { width: 78px; margin-left: 14px; display: flex; flex-direction: column; align-items: center; font-size: 15px; line-height: 23px; }
.notice { position: relative; margin-left: 22px; width: 46px; height: 50px; padding-top: 15px; border-right: 1px solid #7c8798; }
.notice svg { width: 20px; height: 18px; }
.badge { position: absolute; left: 9px; top: 24px; width: 20px; height: 20px; border-radius: 50%; border: 1px solid #8a8f96; background: #2b3139; font-size: 14px; line-height: 18px; text-align: center; }
```
FILE: tracking.js
```
// Sets the letter spacing of each label so that it fills its designed width (data-w, in px).
document.querySelectorAll('[data-w]').forEach(function (el) {
  var range = document.createRange();
  range.selectNodeContents(el);
  var natural = range.getBoundingClientRect().width;
  var target = Number(el.dataset.w);
  el.style.letterSpacing = ((target - natural) / el.textContent.length).toFixed(3) + 'px';
});
```
